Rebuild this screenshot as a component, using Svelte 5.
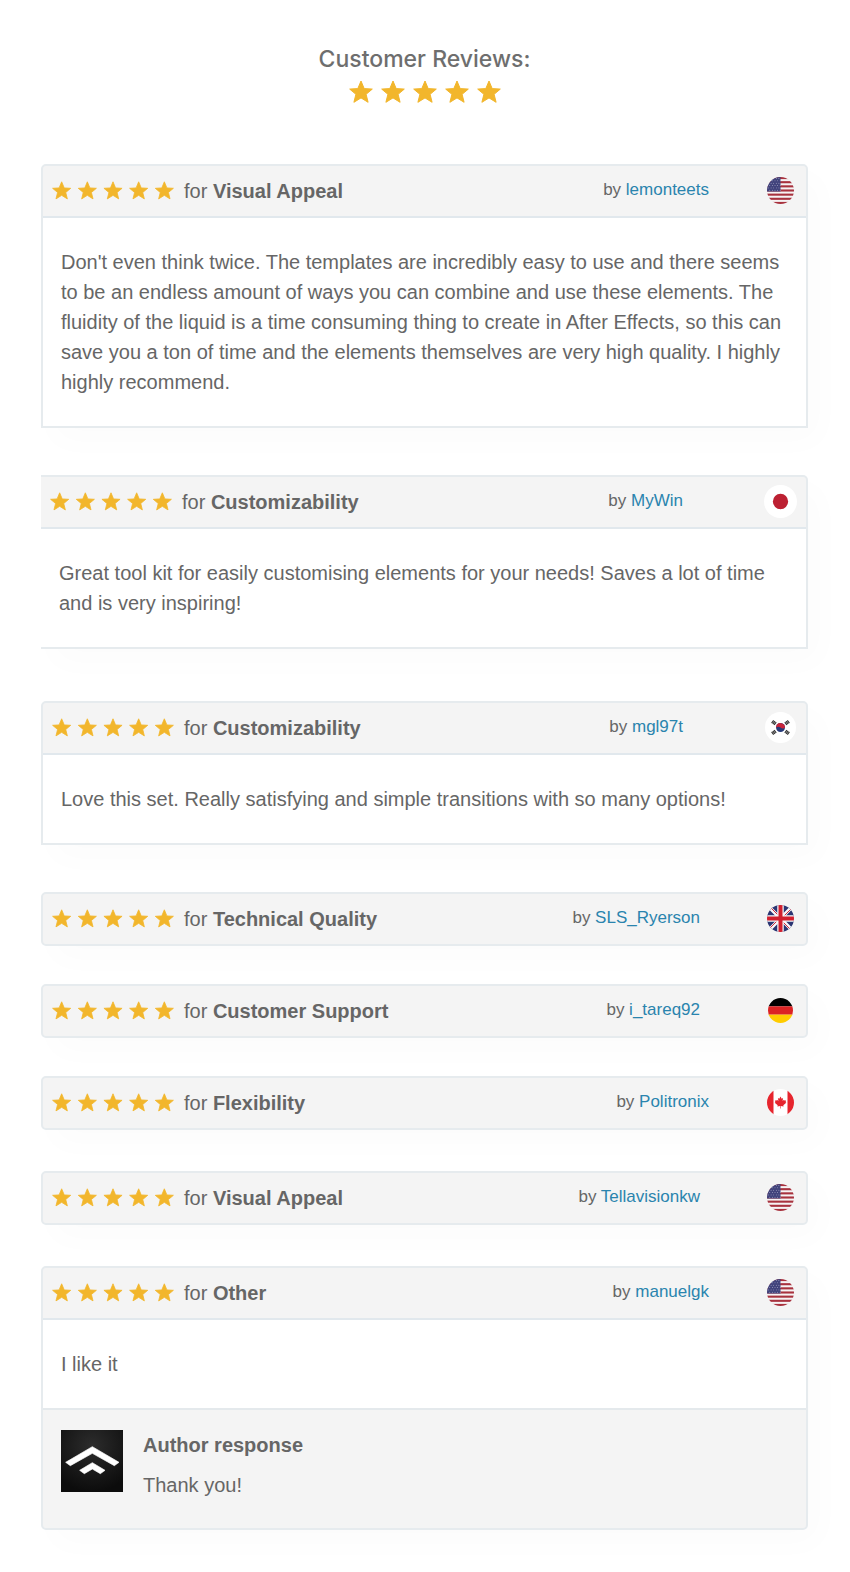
<script lang="ts">
    type Country = "us" | "jp" | "kr" | "gb" | "de" | "ca";

    type Review = {
        topic: string;
        author: string;
        country: Country;
        align?: "near" | "far";
        loose?: boolean;
        openEdge?: boolean;
        text?: string;
        response?: string;
    };

    const reviews: Review[] = [
        {
            topic: "Visual Appeal",
            author: "lemonteets",
            country: "us",
            align: "near",
            text: "Don't even think twice. The templates are incredibly easy to use and there seems to be an endless amount of ways you can combine and use these elements. The fluidity of the liquid is a time consuming thing to create in After Effects, so this can save you a ton of time and the elements themselves are very high quality. I highly highly recommend.",
        },
        {
            topic: "Customizability",
            author: "MyWin",
            country: "jp",
            align: "far",
            loose: true,
            openEdge: true,
            text: "Great tool kit for easily customising elements for your needs! Saves a lot of time and is very inspiring!",
        },
        {
            topic: "Customizability",
            author: "mgl97t",
            country: "kr",
            align: "far",
            text: "Love this set. Really satisfying and simple transitions with so many options!",
        },
        { topic: "Technical Quality", author: "SLS_Ryerson", country: "gb" },
        { topic: "Customer Support", author: "i_tareq92", country: "de" },
        { topic: "Flexibility", author: "Politronix", country: "ca", align: "near", loose: true },
        { topic: "Visual Appeal", author: "Tellavisionkw", country: "us", loose: true },
        {
            topic: "Other",
            author: "manuelgk",
            country: "us",
            align: "near",
            text: "I like it",
            response: "Thank you!",
        },
    ];

    const countryNames: Record<Country, string> = {
        us: "United States",
        jp: "Japan",
        kr: "South Korea",
        gb: "United Kingdom",
        de: "Germany",
        ca: "Canada",
    };

    const five = [0, 1, 2, 3, 4];
</script>

{#snippet stars()}
    <svg class="stars" viewBox="0 0 152 24" role="img" aria-label="5 out of 5 stars">
        {#each five as i}
            <path
                transform="translate({i * 32} 0)"
                d="M12 1 L15.2 8.6 L23.3 9.1 L17.1 14.3 L19.1 22.3 L12 17.9 L4.9 22.3 L6.9 14.3 L0.7 9.1 L8.8 8.6 Z"
            />
        {/each}
    </svg>
{/snippet}

{#snippet flag(country: Country)}
    <span class="flag">
        <svg class={country} viewBox="0 0 54 54" role="img" aria-label={countryNames[country]}>
            {#if country === "us"}
                <rect width="54" height="54" fill="#f6f3f4" />
                {#each [0, 1, 2, 3, 4, 5, 6] as i}
                    <rect y={i * 8.3} width="54" height="4.2" fill="#a8323e" />
                {/each}
                <rect width="27" height="29" fill="#41437c" />
                {#each [0, 1, 2, 3, 4, 5] as row}
                    {#each [0, 1, 2, 3, 4] as col}
                        <circle
                            cx={3 + col * 5.2 + (row % 2) * 2.6}
                            cy={3 + row * 4.7}
                            r="0.9"
                            fill="#c9cade"
                        />
                    {/each}
                {/each}
            {:else if country === "jp"}
                <rect width="54" height="54" fill="#fff" />
                <circle cx="27" cy="27" r="12.5" fill="#bc2032" />
            {:else if country === "kr"}
                <rect width="54" height="54" fill="#fff" />
                <circle cx="27" cy="27" r="7.8" fill="#263a78" />
                <path
                    d="M19.3 26 A7.8 7.8 0 0 1 34.8 27.6 C32.5 29.4 29 29 27 27.2 C25 25.4 21.5 25 19.2 27.4 Z"
                    fill="#c9243a"
                />
                <g stroke="#333" stroke-width="2">
                    <path d="M11.5 19.5 l3.6 -5 M13.7 21 l3.6 -5 M15.9 22.5 l3.6 -5" />
                    <path d="M38.9 14.5 l3.6 5 M36.7 16 l3.6 5 M34.5 17.5 l3.6 5" />
                    <path d="M11.5 34.5 l3.6 5 M13.7 33 l3.6 5 M15.9 31.5 l3.6 5" />
                    <path d="M38.9 39.5 l3.6 -5 M36.7 38 l3.6 -5 M34.5 36.5 l3.6 -5" />
                </g>
            {:else if country === "gb"}
                <rect width="54" height="54" fill="#2b3673" />
                <path d="M0 0 L54 54 M54 0 L0 54" stroke="#f7f7f9" stroke-width="7" />
                <path d="M5 3 L27 25 M3 49 L25 27 M49 51 L27 29 M51 5 L29 27" stroke="#d02a3c" stroke-width="2" />
                <path d="M27 0 V54 M0 27 H54" stroke="#f7f7f9" stroke-width="13" />
                <path d="M27 0 V54 M0 27 H54" stroke="#d2202f" stroke-width="8" />
            {:else if country === "de"}
                <rect width="54" height="18" fill="#000" />
                <rect y="18" width="54" height="18" fill="#dc2324" />
                <rect y="36" width="54" height="18" fill="#fc0" />
            {:else}
                <rect width="54" height="54" fill="#fff" />
                <path d="M0 0 H13 V54 H0 Z M41 0 H54 V54 H41 Z" fill="#e6252e" />
                <path
                    d="M27 15 L29.4 19.5 L32.2 18.2 L31.2 24 L34 21.4 L34.8 23.2 L38.3 22.8 L37.2 26.6 L38.6 27.7 L32.6 32.4 L33.2 35 L27.6 34.2 V39 H26.4 V34.2 L20.8 35 L21.4 32.4 L15.4 27.7 L16.8 26.6 L15.7 22.8 L19.2 23.2 L20 21.4 L22.8 24 L21.8 18.2 L24.6 19.5 Z"
                    fill="#e6252e"
                />
            {/if}
        </svg>
    </span>
{/snippet}

<main class="page">
    <header class="title">
        <h1>Customer Reviews:</h1>
        {@render stars()}
    </header>

    {#each reviews as review}
        <article
            class="review"
            class:expanded={review.text}
            class:loose={review.loose}
            class:answered={review.response}
            class:open-edge={review.openEdge}
        >
            <div class="head">
                {@render stars()}
                <h2>for <strong>{review.topic}</strong></h2>
                <div class="meta">
                    <span class="byline {review.align ?? ''}">by <a href="#{review.author}">{review.author}</a></span>
                    {@render flag(review.country)}
                </div>
            </div>
            {#if review.text}
                <p class="text">{review.text}</p>
            {/if}
            {#if review.response}
                <div class="response">
                    <svg class="avatar" viewBox="0 0 186 186" role="img" aria-label="Author">
                        <defs>
                            <radialGradient id="avatar-glow" cx="50%" cy="25%" r="75%">
                                <stop offset="0" stop-color="#2c2c2c" />
                                <stop offset="1" stop-color="#0c0c0c" />
                            </radialGradient>
                        </defs>
                        <rect width="186" height="186" fill="url(#avatar-glow)" />
                        <path
                            d="M94 50 L174 97 L160 107 L94 70 L28 107 L14 97 Z M94 98 L132 121 L118 131 L94 117 L70 131 L56 121 Z"
                            fill="#fff"
                            stroke="#fff"
                            stroke-width="2"
                            stroke-linejoin="round"
                        />
                    </svg>
                    <div>
                        <h3>Author response</h3>
                        <p>{review.response}</p>
                    </div>
                </div>
            {/if}
        </article>
    {/each}
</main>

<style>
    :global(body) {
        margin: 0;
        background: #fff;
    }

    .page {
        padding: 44px 42px 40px 41px;
        color: #666;
        font-family: "Liberation Sans", Arial, sans-serif;
        font-size: 20px;
        line-height: 30px;
    }

    h1,
    h2,
    h3,
    p {
        margin: 0;
        font-size: 20px;
        font-weight: normal;
    }

    .title {
        display: flex;
        flex-direction: column;
        align-items: center;
        margin-bottom: 60px;

        & h1 {
            color: #6e6e6e;
            font-family: Inter, sans-serif;
            font-size: 23px;
            font-weight: 500;
        }

        & .stars {
            width: 152px;
            margin-top: 6px;
        }
    }

    .stars {
        display: block;
        flex: none;
        width: 122px;
        overflow: visible;
        fill: #f2b62c;
        stroke: #f2b62c;
        stroke-width: 1;
        stroke-linejoin: round;
    }

    .review {
        margin-bottom: 38px;
        border: 2px solid #e6ebee;
        border-radius: 5px;
        background: #f4f4f4;
        box-shadow: 12px 14px 32px rgba(0, 0, 0, 0.016);

        &.loose {
            margin-bottom: 41px;
        }
    }

    .expanded {
        margin-bottom: 47px;
        border-radius: 5px 5px 0 0;

        &.loose {
            margin-bottom: 52px;
        }

        & .head {
            border-bottom: 2px solid #e1e8ed;
        }
    }

    .answered {
        margin-bottom: 0;
        border-radius: 5px;
    }

    .open-edge {
        border-left: 0;
        border-top-left-radius: 0;
    }

    .head {
        display: flex;
        align-items: center;
        height: 50px;
        padding: 0 9px;

        & h2 {
            margin-left: 10px;
        }
    }

    .meta {
        display: flex;
        align-items: center;
        margin-left: auto;
        padding-bottom: 2px;
    }

    .byline {
        margin-right: 63px;
        font-size: 17px;

        &.near {
            margin-right: 54px;
        }

        &.far {
            margin-right: 80px;
        }

        & a {
            color: #2a84ae;
            text-decoration: none;
        }
    }

    .flag {
        display: flex;
        align-items: center;
        justify-content: center;
        width: 34px;
        height: 34px;

        & svg {
            width: 27px;
            height: 27px;
            border-radius: 50%;
        }

        & .jp {
            width: 33px;
            height: 33px;
        }

        & .kr {
            width: 31px;
            height: 31px;
        }

        & .de {
            width: 25px;
            height: 25px;
        }
    }

    .text {
        padding: 29px 18px;
        background: #fff;
    }

    .response {
        display: flex;
        gap: 20px;
        padding: 20px 18px 28px;
        border-top: 2px solid #e4e9ec;

        & h3 {
            margin-bottom: 10px;
            font-weight: bold;
        }
    }

    .avatar {
        flex: none;
        width: 62px;
        height: 62px;
    }
</style>
